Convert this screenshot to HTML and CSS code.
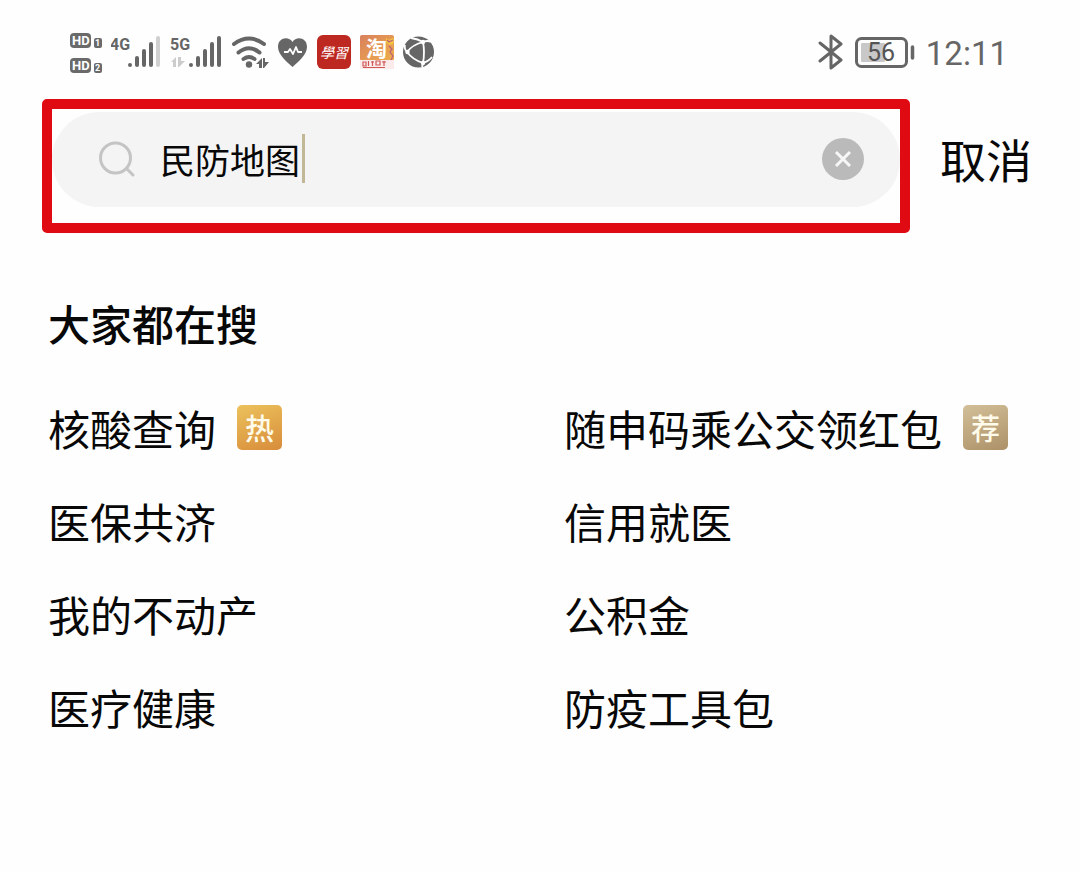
FILE: index.html
```html
<!DOCTYPE html>
<html lang="zh-CN">
<head>
<meta charset="utf-8">
<meta name="viewport" content="width=device-width, initial-scale=1">
<title>搜索</title>
<link rel="stylesheet" href="styles.css">
</head>
<body>
<header class="status">
  <div class="status-group">
    <svg width="32" height="44" viewBox="0 0 32 44" role="img" aria-label="HD 1 HD 2">
      <g fill="#6a6a6a"><rect y="3" width="21" height="15" rx="4"/><rect x="24" y="8" width="8" height="10" rx="2"/><rect y="28" width="21" height="15" rx="4"/><rect x="24" y="33" width="8" height="10" rx="2"/></g>
      <g class="hd"><text x="2" y="15">HD</text><text x="2" y="40">HD</text></g>
      <g class="sim"><text x="25" y="16">1</text><text x="25" y="41">2</text></g>
    </svg>
    <svg width="50" height="44" viewBox="0 0 50 44" role="img" aria-label="4G">
      <text class="net" x="-1" y="20">4G</text>
      <g class="bars"><path d="M19 35v0M26 28v7M33 21v14M40 14v21"/><path class="faint" d="M47 8v27"/></g>
    </svg>
    <svg width="52" height="44" viewBox="0 0 52 44" role="img" aria-label="5G">
      <text class="net" x="0" y="20">5G</text>
      <path d="M1 32l5-5v10H3v-5zM8 27h3v4h4l-6 6H8z" fill="#ccc"/>
      <g class="bars"><path d="M21 35v0M28 28v7M35 21v14M42 14v21M49 8v27"/></g>
    </svg>
    <svg width="38" height="44" viewBox="0 0 38 44" role="img" aria-label="Wi-Fi">
      <path d="M3 14Q18 3 33 14M7.500 22.500Q18 14 28.500 22.500M12.500 29Q18 25 23.500 29" fill="none" stroke="#666" stroke-width="4" stroke-linecap="round"/>
      <circle cx="18" cy="34.500" r="3.200" fill="#666"/>
      <path d="M25 34l6-6v10h-3v-4zM32 28h2v4h4l-5 6h-1z" fill="#666"/>
    </svg>
    <svg width="29" height="44" viewBox="0 0 29 44" role="img" aria-label="健康">
      <path d="M14.500 37C10 33 0 25 0 17C0 7 11 6 14.500 12C18 6 29 7 29 17C29 25 19 33 14.500 37z" fill="#666"/>
      <path d="M6 22h4l2-3 3 5 3-7 2 5h4" fill="none" stroke="#fff" stroke-width="1.800" stroke-linejoin="round"/>
    </svg>
    <svg width="35" height="44" viewBox="0 0 35 44" role="img" aria-label="学习">
      <rect x="1" y="5" width="34" height="34" rx="6" fill="#bd2920"/>
      <text class="study" x="4" y="28">學習</text>
    </svg>
    <svg width="34" height="44" viewBox="0 0 34 44" role="img" aria-label="淘宝">
      <defs><linearGradient id="tao" x1="0" y1="0" x2="1" y2="1"><stop offset="0" stop-color="#d9805c"/><stop offset="1" stop-color="#efae4c"/></linearGradient></defs>
      <rect y="5" width="34" height="26" rx="2" fill="url(#tao)"/>
      <rect y="30" width="34" height="9" fill="#fbeceb"/>
      <text class="tao" x="6" y="26">淘</text>
      <path d="M26 8l3 2 4-2 1 2-1 4-4 1-3-3z" fill="#f4c542"/>
      <path d="M27 10l2 2 4-2M29 16l3 3-2 3 3 4-2 4" fill="none" stroke="#b8607a" stroke-width="1.200"/>
      <path d="M3 32h3v4H3zM8.500 31v5M11 32h3M12.500 31v5M16 31h4v4h-4zM22 32h4M24 31v5M3 37.500h22" fill="none" stroke="#d05856" stroke-width="1.200"/>
    </svg>
    <svg width="31" height="44" viewBox="0 0 31 44" role="img" aria-label="网络">
      <circle cx="15.500" cy="22" r="15.500" fill="#666"/>
      <path d="M8 8Q15 9 20 12Q25 10 28 12M20 12Q9 15 4 22Q10 30 20 33M4 22Q1 19 2 15M20 12Q22 22 20 33M20 33Q26 31 29 27M20 33L19 37" fill="none" stroke="#fff" stroke-width="1.800"/>
      <g fill="#fff"><circle cx="20" cy="12" r="2.200"/><circle cx="4.500" cy="22" r="2.200"/><circle cx="20" cy="33" r="2.200"/></g>
    </svg>
  </div>
  <div class="status-group status-right">
    <svg width="26" height="44" viewBox="0 0 26 44" role="img" aria-label="蓝牙">
      <path d="M2 13l21 17-10 8V6l10 8L2 31" fill="none" stroke="#666" stroke-width="3" stroke-linejoin="round" stroke-linecap="round"/>
    </svg>
    <svg width="60" height="44" viewBox="0 0 60 44" role="img" aria-label="电量 56">
      <rect x="1.500" y="8.500" width="50" height="28" rx="5" fill="none" stroke="#666" stroke-width="3"/>
      <rect x="6" y="13" width="24" height="19" rx="1" fill="#c8c8c8"/>
      <path d="M57.500 17v11" stroke="#666" stroke-width="3.500" stroke-linecap="round"/>
      <text class="charge" x="12" y="31">56</text>
    </svg>
    <time class="clock">12:11</time>
  </div>
</header>
<main>
  <form class="search">
    <div class="frame">
      <div class="pill">
        <svg class="lens" width="38" height="38" viewBox="0 0 38 38" aria-hidden="true"><g fill="none" stroke="#c4c4c4" stroke-width="3" stroke-linecap="round"><circle cx="17.500" cy="18" r="15"/><path d="M29 29l6 6"/></g></svg>
        <input class="query" type="text" aria-label="搜索" value="民防地图">
        <span class="caret"></span>
        <button class="clear" type="reset" aria-label="清除"><svg width="18" height="18" viewBox="0 0 18 18"><path d="M2 2l14 14M16 2L2 16" stroke="#f7f7f7" stroke-width="3"/></svg></button>
      </div>
    </div>
    <button class="cancel" type="button">取消</button>
  </form>
  <section class="trending">
    <h2 class="title">大家都在搜</h2>
    <ul class="list">
      <li class="item"><a href="#">核酸查询</a><span class="badge hot">热</span></li>
      <li class="item"><a href="#">随申码乘公交领红包</a><span class="badge pick">荐</span></li>
      <li class="item"><a href="#">医保共济</a></li>
      <li class="item"><a href="#">信用就医</a></li>
      <li class="item"><a href="#">我的不动产</a></li>
      <li class="item"><a href="#">公积金</a></li>
      <li class="item"><a href="#">医疗健康</a></li>
      <li class="item"><a href="#">防疫工具包</a></li>
    </ul>
  </section>
</main>
</body>
</html>
```
FILE: styles.css
```css
* { box-sizing: border-box; }
body {
  margin: 0;
  background: #fefefe;
  color: #080808;
  font-family: "Noto Sans CJK SC", sans-serif;
}
button, input { font: inherit; color: inherit; border: 0; padding: 0; background: none; }
button { cursor: pointer; }
svg { display: block; }

.status {
  display: flex;
  justify-content: space-between;
  padding: 30px 72px 0 70px;
}
.status-group { display: flex; align-items: center; gap: 9px; }
.status-right { gap: 11px; }
.status text { font-family: Roboto, sans-serif; fill: #666; }
.status .hd text { font-size: 13px; font-weight: 700; fill: #fff; }
.status .sim text { font-size: 9px; font-weight: 700; fill: #fff; }
.status .net { font-size: 16px; font-weight: 700; }
.status .study { font-family: "Noto Sans CJK TC", sans-serif; font-size: 14px; font-style: italic; fill: #fff; }
.status .tao { font-family: "Noto Sans CJK SC", sans-serif; font-size: 21px; font-weight: 700; fill: #fff; }
.status .charge { font-size: 25px; fill: #555; }
.bars { fill: none; stroke: #666; stroke-width: 4; stroke-linecap: round; }
.bars .faint { stroke: #d0d0d0; }
.clock { padding-top: 3px; font-family: Roboto, sans-serif; font-size: 33px; line-height: 41px; color: #666; }

.search {
  display: flex;
  align-items: center;
  gap: 30px;
  padding: 25px 48px 0 42px;
}
.frame {
  flex: 1;
  min-width: 0;
  padding: 3px 0 16px;
  border: 10px solid #e00b12;
  border-radius: 5px;
}
.pill {
  display: flex;
  align-items: center;
  height: 95px;
  padding: 0 36px 2px 46px;
  border-radius: 48px;
  background: #f4f4f4;
}
.query { width: 142px; height: 52px; margin-left: 24px; font-size: 35px; outline: 0; }
.caret { width: 3px; height: 49px; background: #c0b896; }
.clear {
  display: grid;
  place-items: center;
  width: 42px;
  height: 42px;
  margin-left: auto;
  border-radius: 50%;
  background: #bababa;
}
.cancel { font-size: 46px; line-height: 56px; white-space: nowrap; padding-bottom: 16px; }

.trending { padding: 60px 0 0 48px; }
.title { margin: 0 0 45px; font-size: 42px; line-height: 60px; font-weight: 500; }
.list {
  display: grid;
  grid-template-columns: 1fr 1fr;
  row-gap: 33px;
  margin: 0;
  padding: 0;
  list-style: none;
}
.item { display: flex; align-items: center; gap: 21px; font-size: 42px; line-height: 60px; white-space: nowrap; }
.item a { color: inherit; text-decoration: none; }
.badge {
  width: 45px;
  height: 45px;
  margin-bottom: 2px;
  border-radius: 5px;
  color: #fffbea;
  font-size: 29px;
  font-weight: 500;
  line-height: 45px;
  text-align: center;
}
.hot { background: linear-gradient(160deg, #ecc25c, #d88c3a); }
.pick { background: linear-gradient(160deg, #d2bf98, #ad9168); }
```
